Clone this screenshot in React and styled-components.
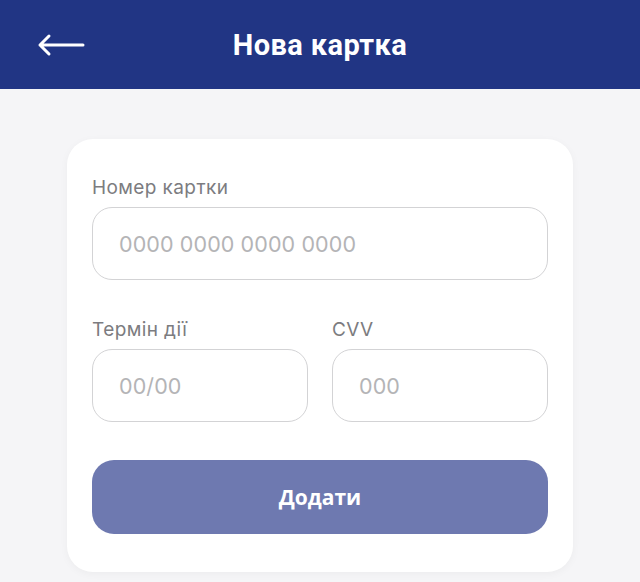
import React from "react";
import styled, { createGlobalStyle } from "styled-components";

const Global = createGlobalStyle`
  html, body { margin: 0; padding: 0; background: #f5f5f7; }
  body { font-family: Inter, "Noto Sans", sans-serif; }
  * { box-sizing: border-box; }
`;

const Page = styled.div`
  width: 640px;
  height: 582px;
  background: #f5f5f7;
  display: flex;
  flex-direction: column;
  overflow: hidden;
`;

const Header = styled.header`
  height: 89px;
  background: #213584;
  display: grid;
  grid-template-columns: 1fr auto 1fr;
  align-items: center;
  padding: 0 37px;
  flex-shrink: 0;
`;

const BackButton = styled.button`
  background: none;
  border: 0;
  padding: 0;
  width: 48px;
  height: 24px;
  display: flex;
  align-items: center;
  cursor: pointer;
  justify-self: start;
`;

const Title = styled.h1`
  margin: 0;
  color: #fff;
  font-family: Roboto, "Liberation Sans", sans-serif;
  font-weight: 700;
  font-size: 29px;
  letter-spacing: 0.4px;
`;

const Body = styled.main`
  padding: 50px 67px 0 67px;
  flex: 1;
`;

const Card = styled.section`
  background: #fff;
  border-radius: 26px;
  box-shadow: 0 2px 8px rgba(0, 0, 0, 0.04);
  padding: 38px 25px 38px 25px;
  display: flex;
  flex-direction: column;
`;

const Field = styled.label`
  display: flex;
  flex-direction: column;
  gap: 8px;
  min-width: 0;
`;

const Label = styled.span`
  font-size: 19px;
  color: #7c7c80;
  line-height: 22px;
  letter-spacing: 0.4px;
`;

const Input = styled.input`
  height: 73px;
  width: 100%;
  border: 1.5px solid #d3d3d5;
  border-radius: 20px;
  background: #fff;
  padding: 0 26px;
  font-family: Inter, "Noto Sans", sans-serif;
  font-size: 21.5px;
  letter-spacing: 0.1px;
  color: #333;
  outline: none;
  &::placeholder { color: #b4b4b6; }
`;

const Row = styled.div`
  display: grid;
  grid-template-columns: 1fr 1fr;
  gap: 24px;
  margin-top: ${(p) => p.$mt}px;
`;

const Submit = styled.button`
  margin-top: 38px;
  height: 74px;
  border: 0;
  border-radius: 22px;
  background: #6e79b0;
  color: #fff;
  font-family: "Open Sans", Roboto, sans-serif;
  font-weight: 700;
  font-size: 21px;
  cursor: pointer;
`;

export default function App() {
  return (
    <>
      <Global />
      <Page>
        <Header>
          <BackButton aria-label="Назад">
            <svg width="48" height="24" viewBox="0 0 48 24" fill="none">
              <path d="M46 12H3M12 3L3 12l9 9" stroke="#fff" strokeWidth="3" strokeLinecap="round" strokeLinejoin="round" />
            </svg>
          </BackButton>
          <Title>Нова картка</Title>
          <span />
        </Header>
        <Body>
          <Card>
            <Field>
              <Label>Номер картки</Label>
              <Input placeholder="0000 0000 0000 0000" />
            </Field>
            <Row $mt={39}>
              <Field>
                <Label>Термін дії</Label>
                <Input placeholder="00/00" />
              </Field>
              <Field>
                <Label>CVV</Label>
                <Input placeholder="000" />
              </Field>
            </Row>
            <Submit>Додати</Submit>
          </Card>
        </Body>
      </Page>
    </>
  );
}
